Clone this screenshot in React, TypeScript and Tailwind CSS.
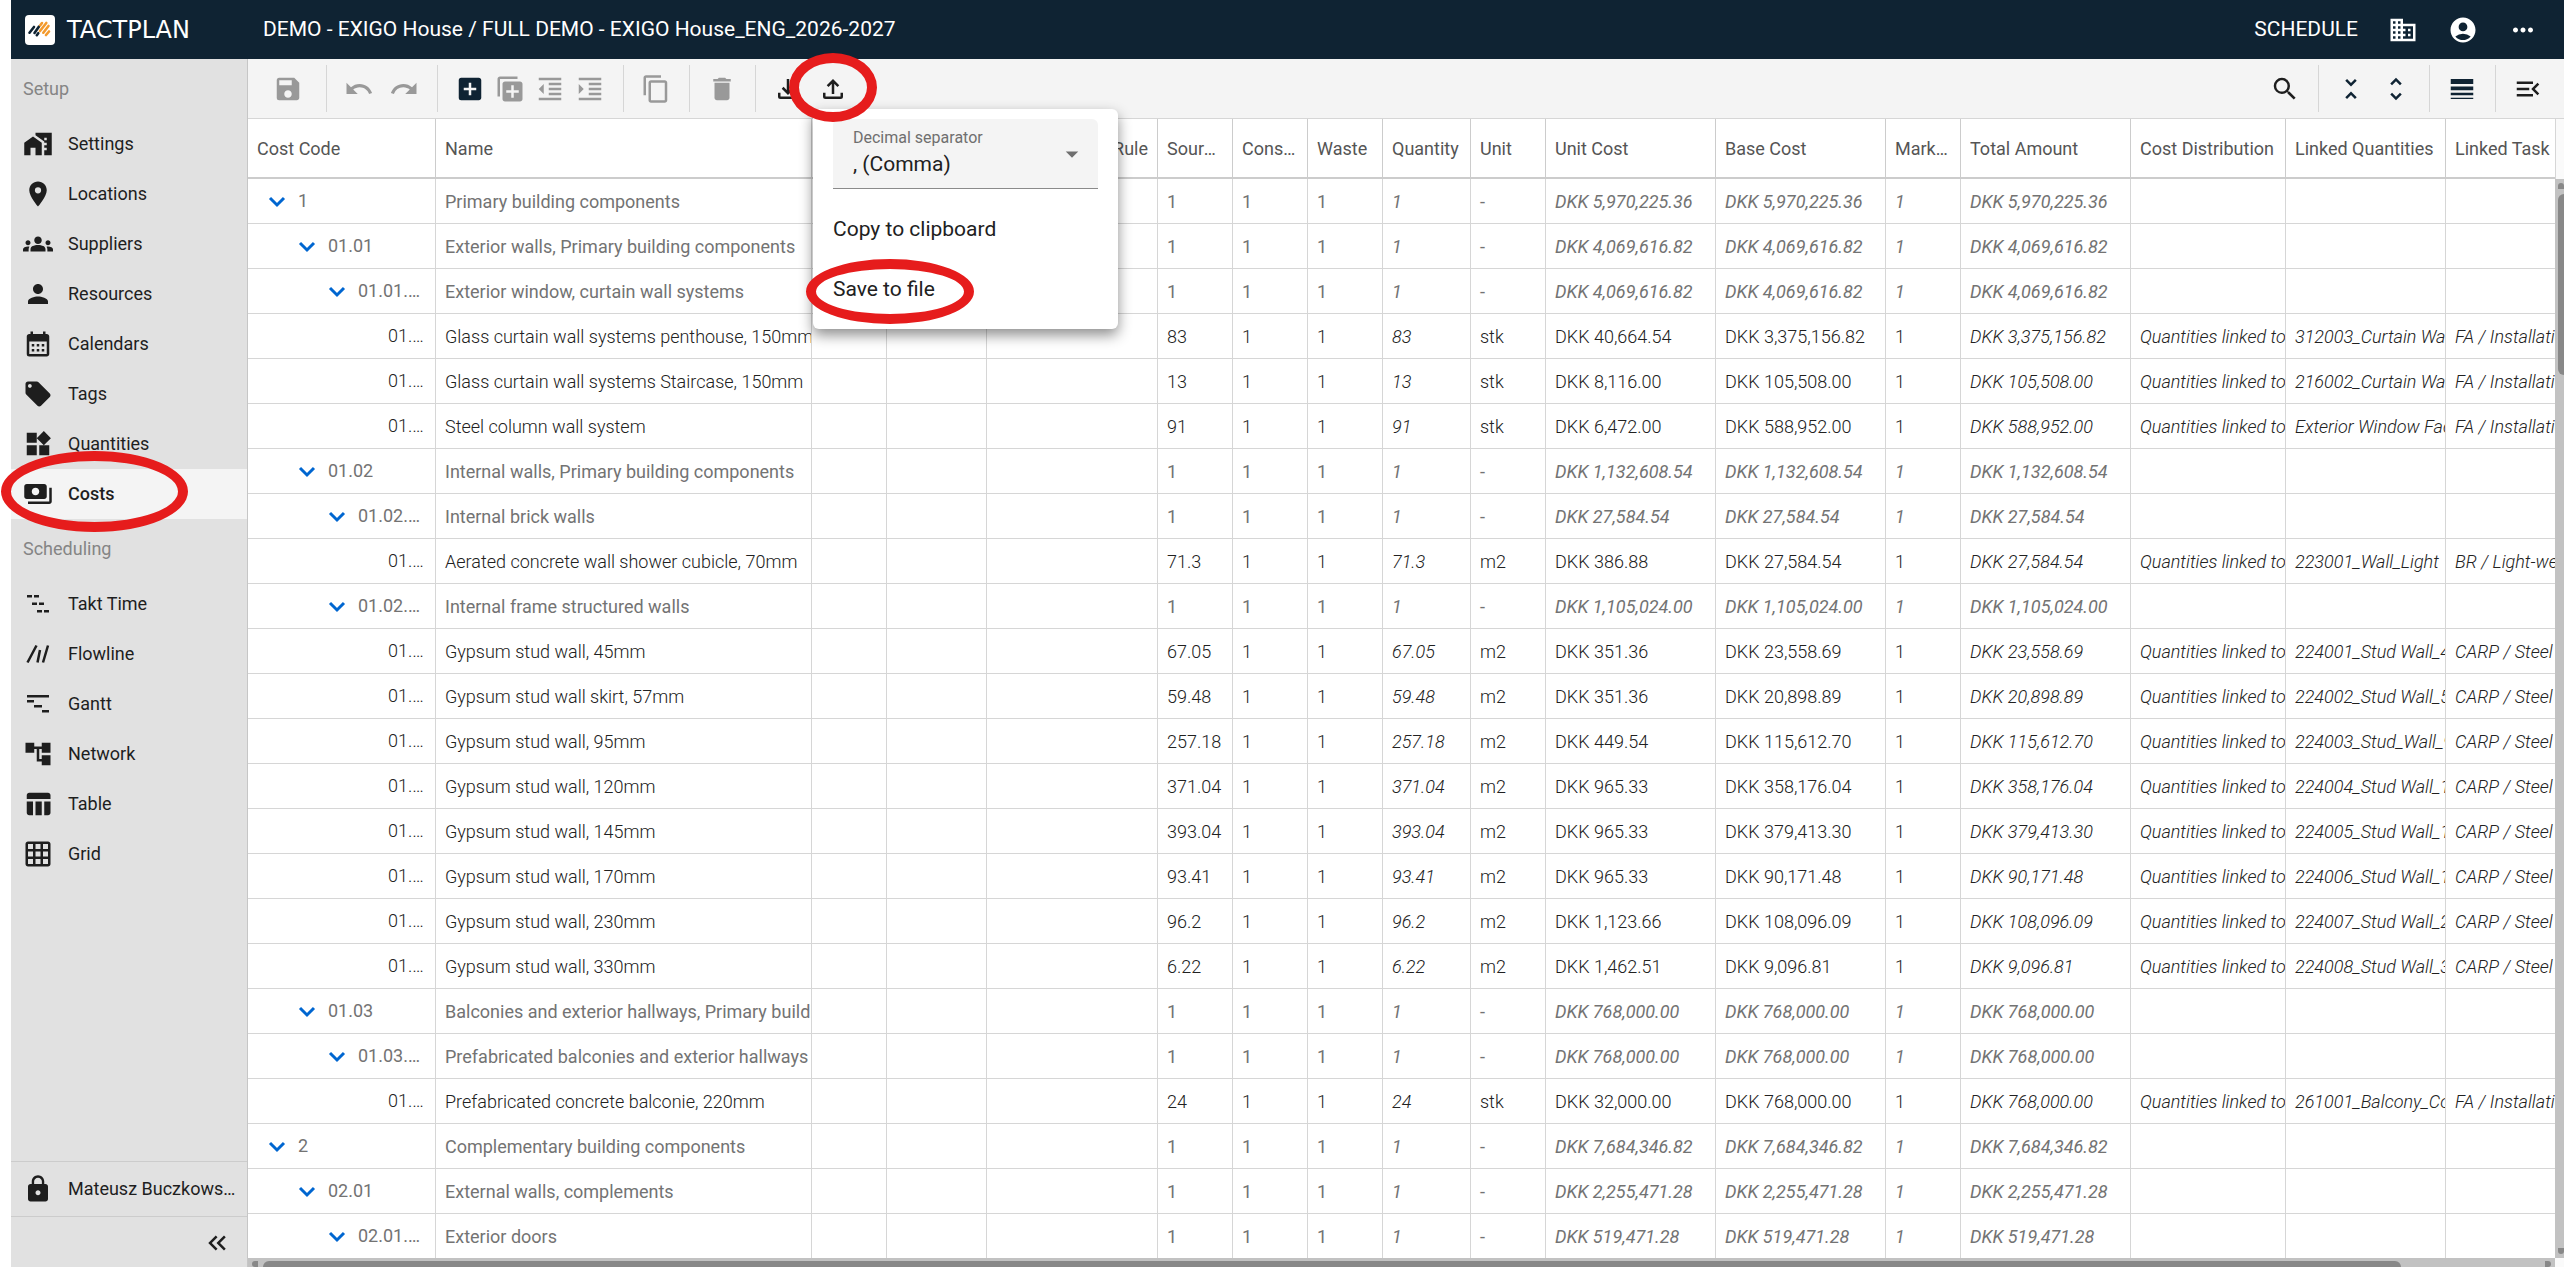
import type { ReactNode } from "react";
import type { IconType } from "react-icons";
import {
  MdAccountCircle,
  MdAccountTree,
  MdAddBox,
  MdArrowDropDown,
  MdBusiness,
  MdCalendarMonth,
  MdContentCopy,
  MdDelete,
  MdFormatIndentDecrease,
  MdFormatIndentIncrease,
  MdGridOn,
  MdGroups,
  MdHomeWork,
  MdKeyboardDoubleArrowLeft,
  MdLibraryAdd,
  MdLocalOffer,
  MdLocationOn,
  MdLock,
  MdMenuOpen,
  MdMoreHoriz,
  MdPayments,
  MdPerson,
  MdRedo,
  MdSave,
  MdSearch,
  MdTableChart,
  MdUndo,
  MdUnfoldLess,
  MdUnfoldMore,
  MdWidgets,
} from "react-icons/md";

type Icon = IconType | ((props: { className?: string }) => ReactNode);

/* ---------- Custom icons ---------- */

const TaktIcon = ({ className }: { className?: string }) => (
  <svg viewBox="0 0 24 24" fill="currentColor" className={className}>
    <path d="M1 3h5v2.500H1zM8 3h5v2.500H8zM6 10.500h5V13H6zM13 10.500h5V13h-5zM11 18h5v2.500h-5zM18 18h5v2.500h-5z" />
  </svg>
);

const FlowlineIcon = ({ className }: { className?: string }) => (
  <svg
    viewBox="0 0 24 24"
    fill="none"
    stroke="currentColor"
    strokeWidth="2.500"
    className={className}
  >
    <path d="M1.500 20.500L10.500 3.500M11.500 20.500L14 8M17 20.500L22 3.500" />
  </svg>
);

const GanttIcon = ({ className }: { className?: string }) => (
  <svg viewBox="0 0 24 24" fill="currentColor" className={className}>
    <path d="M1 3h22v2.500H1zM1 8h7v2.500H1zM8 13h8v2.500H8zM16 18h7v2.500h-7z" />
  </svg>
);

const DownloadIcon = ({ className }: { className?: string }) => (
  <svg
    viewBox="0 0 24 24"
    fill="none"
    stroke="currentColor"
    strokeWidth="2"
    className={className}
  >
    <path d="M12 4v11M7.700 11L12 15.300L16.300 11" />
    <path d="M5 15v3a1 1 0 0 0 1 1h12a1 1 0 0 0 1-1V15" />
  </svg>
);

const UploadIcon = ({ className }: { className?: string }) => (
  <svg
    viewBox="0 0 24 24"
    fill="none"
    stroke="currentColor"
    strokeWidth="2"
    className={className}
  >
    <path d="M12 16V5.500M7.700 9.700L12 5.400L16.300 9.700" />
    <path d="M5 15v3a1 1 0 0 0 1 1h12a1 1 0 0 0 1-1V15" />
  </svg>
);

const DuplicateIcon = ({ className }: { className?: string }) => (
  <MdLibraryAdd className={`${className} -scale-y-100`} />
);

const LineWeightIcon = ({ className }: { className?: string }) => (
  <svg viewBox="0 0 24 24" fill="currentColor" className={className}>
    <path d="M3 17h18v-2H3v2zm0 3h18v-1H3v1zm0-7h18v-3H3v3zm0-9v4h18V4H3z" />
  </svg>
);

const ChevronIcon = () => (
  <svg
    viewBox="0 0 18 18"
    fill="none"
    stroke="currentColor"
    strokeWidth="3"
    className="size-[18px] shrink-0 text-[#0066d0]"
  >
    <path d="M2 6L9 13L16 6" />
  </svg>
);

const Logo = () => (
  <a href="#home" className="flex w-[238px] items-center gap-3">
    <svg viewBox="0 0 30 30" className="size-[30px]">
      <rect width="30" height="30" rx="4" fill="#fff" />
      <g strokeWidth="2.600" strokeLinecap="round">
        <path
          d="M4.500 17.700L9 12M9.500 18L14 11.500M11.800 20.200L13.300 18.200"
          stroke="#0f2333"
        />
        <path
          d="M15.300 10.300L17 8M15 16L21.300 8M18.300 17.700L23.500 11M21 20L24 16.500"
          stroke="#f39a2d"
        />
      </g>
    </svg>
    <span className="font-['DejaVu_Sans',sans-serif] text-2xl">TACTPLAN</span>
  </a>
);

/* ---------- Data ---------- */

const setupItems: { label: string; icon: Icon }[] = [
  { label: "Settings", icon: MdHomeWork },
  { label: "Locations", icon: MdLocationOn },
  { label: "Suppliers", icon: MdGroups },
  { label: "Resources", icon: MdPerson },
  { label: "Calendars", icon: MdCalendarMonth },
  { label: "Tags", icon: MdLocalOffer },
  { label: "Quantities", icon: MdWidgets },
  { label: "Costs", icon: MdPayments },
];

const schedulingItems: { label: string; icon: Icon }[] = [
  { label: "Takt Time", icon: TaktIcon },
  { label: "Flowline", icon: FlowlineIcon },
  { label: "Gantt", icon: GanttIcon },
  { label: "Network", icon: MdAccountTree },
  { label: "Table", icon: MdTableChart },
  { label: "Grid", icon: MdGridOn },
];

const columns = [
  { label: "Cost Code", width: "w-[188px]" },
  { label: "Name", width: "w-[376px]" },
  { label: "", width: "w-[75px]" },
  { label: "", width: "w-[100px]" },
  { label: "Rule", width: "w-[171px]" },
  { label: "Source Quantity", width: "w-[75px]" },
  { label: "Consumption", width: "w-[75px]" },
  { label: "Waste", width: "w-[75px]" },
  { label: "Quantity", width: "w-[88px]" },
  { label: "Unit", width: "w-[75px]" },
  { label: "Unit Cost", width: "w-[170px]" },
  { label: "Base Cost", width: "w-[170px]" },
  { label: "Markup", width: "w-[75px]" },
  { label: "Total Amount", width: "w-[170px]" },
  { label: "Cost Distribution", width: "w-[155px]" },
  { label: "Linked Quantities", width: "w-[160px]" },
  { label: "Linked Task", width: "" },
];

interface CostRow {
  level: number;
  code: string;
  name: string;
  quantity: string;
  unit: string;
  unitCost: string;
  baseCost: string;
  linkedQuantity?: string;
  linkedTask?: string;
}

const group = (
  level: number,
  code: string,
  name: string,
  cost: string
): CostRow => ({
  level,
  code,
  name,
  quantity: "1",
  unit: "-",
  unitCost: cost,
  baseCost: cost,
});

const leaf = (
  code: string,
  name: string,
  quantity: string,
  unit: string,
  unitCost: string,
  baseCost: string,
  linkedQuantity: string,
  linkedTask: string
): CostRow => ({
  level: 3,
  code,
  name,
  quantity,
  unit,
  unitCost,
  baseCost,
  linkedQuantity,
  linkedTask,
});

const rows: CostRow[] = [
  group(0, "1", "Primary building components", "5,970,225.36"),
  group(1, "01.01", "Exterior walls, Primary building components", "4,069,616.82"),
  group(2, "01.01.01", "Exterior window, curtain wall systems", "4,069,616.82"),
  leaf("01.01.01.01", "Glass curtain wall systems penthouse, 150mm", "83", "stk", "40,664.54", "3,375,156.82", "312003_Curtain Wall", "FA / Installation"),
  leaf("01.01.01.02", "Glass curtain wall systems Staircase, 150mm", "13", "stk", "8,116.00", "105,508.00", "216002_Curtain Wall", "FA / Installation"),
  leaf("01.01.01.03", "Steel column wall system", "91", "stk", "6,472.00", "588,952.00", "Exterior Window Facade", "FA / Installation"),
  group(1, "01.02", "Internal walls, Primary building components", "1,132,608.54"),
  group(2, "01.02.01", "Internal brick walls", "27,584.54"),
  leaf("01.02.01.01", "Aerated concrete wall shower cubicle, 70mm", "71.3", "m2", "386.88", "27,584.54", "223001_Wall_Light", "BR / Light-weight"),
  group(2, "01.02.02", "Internal frame structured walls", "1,105,024.00"),
  leaf("01.02.02.01", "Gypsum stud wall, 45mm", "67.05", "m2", "351.36", "23,558.69", "224001_Stud Wall_45", "CARP / Steel"),
  leaf("01.02.02.02", "Gypsum stud wall skirt, 57mm", "59.48", "m2", "351.36", "20,898.89", "224002_Stud Wall_57", "CARP / Steel"),
  leaf("01.02.02.03", "Gypsum stud wall, 95mm", "257.18", "m2", "449.54", "115,612.70", "224003_Stud_Wall_95", "CARP / Steel"),
  leaf("01.02.02.04", "Gypsum stud wall, 120mm", "371.04", "m2", "965.33", "358,176.04", "224004_Stud Wall_120", "CARP / Steel"),
  leaf("01.02.02.05", "Gypsum stud wall, 145mm", "393.04", "m2", "965.33", "379,413.30", "224005_Stud Wall_145", "CARP / Steel"),
  leaf("01.02.02.06", "Gypsum stud wall, 170mm", "93.41", "m2", "965.33", "90,171.48", "224006_Stud Wall_170", "CARP / Steel"),
  leaf("01.02.02.07", "Gypsum stud wall, 230mm", "96.2", "m2", "1,123.66", "108,096.09", "224007_Stud Wall_230", "CARP / Steel"),
  leaf("01.02.02.08", "Gypsum stud wall, 330mm", "6.22", "m2", "1,462.51", "9,096.81", "224008_Stud Wall_330", "CARP / Steel"),
  group(1, "01.03", "Balconies and exterior hallways, Primary building", "768,000.00"),
  group(2, "01.03.01", "Prefabricated balconies and exterior hallways", "768,000.00"),
  leaf("01.03.01.01", "Prefabricated concrete balconie, 220mm", "24", "stk", "32,000.00", "768,000.00", "261001_Balcony_Concrete", "FA / Installation"),
  group(0, "2", "Complementary building components", "7,684,346.82"),
  group(1, "02.01", "External walls, complements", "2,255,471.28"),
  group(2, "02.01.01", "Exterior doors", "519,471.28"),
];

const indents = ["pl-5", "pl-[50px]", "pl-20", "pl-[140px]"];

/* ---------- Layout parts ---------- */

const Header = () => (
  <header className="flex h-[59px] shrink-0 items-center bg-[#0f2333] pr-[26px] pl-[14px] text-white">
    <Logo />
    <h1 className="flex-1 text-[21px]">
      DEMO - EXIGO House / FULL DEMO - EXIGO House_ENG_2026-2027
    </h1>
    <div className="flex items-center gap-[30px]">
      <button className="text-[21px]">SCHEDULE</button>
      <button aria-label="Company">
        <MdBusiness className="size-[30px]" />
      </button>
      <button aria-label="Account">
        <MdAccountCircle className="size-[30px]" />
      </button>
      <button aria-label="More">
        <MdMoreHoriz className="size-[30px]" />
      </button>
    </div>
  </header>
);

const NavItem = ({ label, icon: ItemIcon }: { label: string; icon: Icon }) => {
  const active = label === "Costs";
  return (
    <a
      href={`#${label}`}
      className={`flex h-[50px] items-center gap-[15px] pl-3 text-lg ${
        active ? "bg-[#f4f4f4] font-medium" : ""
      }`}
    >
      <span className="flex size-[30px] items-center justify-center">
        <ItemIcon
          className={
            ["Takt Time", "Flowline", "Gantt"].includes(label)
              ? "size-6"
              : "size-[30px]"
          }
        />
      </span>
      {label}
    </a>
  );
};

const Sidebar = () => (
  <aside className="flex w-[237px] shrink-0 flex-col border-r border-[#c6c6c6] bg-[#e1e1e1] text-[#1e1e1e]">
    <h2 className="flex h-[60px] items-center pl-3 text-lg text-[#858585]">
      Setup
    </h2>
    <nav>
      {setupItems.map((item) => (
        <NavItem key={item.label} {...item} />
      ))}
    </nav>
    <h2 className="flex h-[60px] items-center pl-3 text-lg text-[#858585]">
      Scheduling
    </h2>
    <nav className="flex-1">
      {schedulingItems.map((item) => (
        <NavItem key={item.label} {...item} />
      ))}
    </nav>
    <div className="flex h-[55px] items-center gap-[15px] border-t border-[#cccccc] pr-1 pl-3">
      <MdLock className="size-[30px] shrink-0" />
      <span className="truncate text-lg">Mateusz Buczkowski Exigo</span>
    </div>
    <div className="flex h-[51px] items-center justify-end border-t border-[#cccccc] pt-0.5 pr-[15px]">
      <button aria-label="Collapse sidebar">
        <MdKeyboardDoubleArrowLeft className="size-[30px]" />
      </button>
    </div>
  </aside>
);

const Divider = () => (
  <div className="mr-[17px] ml-[18px] h-[47px] w-px shrink-0 bg-[#d6d6d6]" />
);

const ToolButton = ({
  label,
  icon: ToolIcon,
  className = "text-[#999999]",
}: {
  label: string;
  icon: Icon;
  className?: string;
}) => (
  <button aria-label={label} className={className}>
    <ToolIcon className="size-[30px]" />
  </button>
);

const ExportMenu = () => (
  <div className="absolute top-[35px] -left-[5px] z-20 w-[305px] rounded-md bg-white py-[10px] text-[#212121] shadow-[0_6px_14px_rgba(0,0,0,0.45)]">
    <div className="relative mx-5 h-[70px] rounded-t-md border-b border-[#8a8a8a] bg-[#f4f4f4]">
      <label
        htmlFor="separator"
        className="absolute top-[9px] left-5 text-base leading-5 text-[#6f6f6f]"
      >
        Decimal separator
      </label>
      <select
        id="separator"
        className="h-full w-full appearance-none pt-6 pl-5 text-[21px]"
      >
        <option>, (Comma)</option>
        <option>. (Dot)</option>
      </select>
      <MdArrowDropDown className="pointer-events-none absolute top-5 right-[11px] size-[30px] text-[#6f6f6f]" />
    </div>
    <button className="mt-[10px] flex h-[60px] w-full items-center px-5 pt-0.5 text-[21px]">
      Copy to clipboard
    </button>
    <div className="relative">
      <button className="flex h-[60px] w-full items-center px-5 pt-0.5 text-[21px]">
        Save to file
      </button>
      <div className="pointer-events-none absolute top-0 -left-[7px] h-[65px] w-[168px] rounded-[50%] border-[10px] border-[#e61c1c]" />
    </div>
  </div>
);

const Toolbar = () => (
  <div className="relative z-10 flex h-[60px] shrink-0 items-center border-b border-[#d6d6d6] bg-[#f4f4f4] pr-[21px] pl-[25px] text-[#1e1e1e]">
    <ToolButton label="Save" icon={MdSave} className="mr-[5px] text-[#999999]" />
    <Divider />
    <div className="flex gap-[15px]">
      <ToolButton label="Undo" icon={MdUndo} />
      <ToolButton label="Redo" icon={MdRedo} />
    </div>
    <Divider />
    <div className="flex gap-[10px]">
      <ToolButton label="Add" icon={MdAddBox} className="text-[#0f2333]" />
      <ToolButton label="Duplicate" icon={DuplicateIcon} />
      <ToolButton label="Outdent" icon={MdFormatIndentDecrease} />
      <ToolButton label="Indent" icon={MdFormatIndentIncrease} />
    </div>
    <Divider />
    <ToolButton label="Copy" icon={MdContentCopy} />
    <Divider />
    <ToolButton label="Delete" icon={MdDelete} />
    <Divider />
    <div className="flex gap-[15px]">
      <ToolButton label="Import" icon={DownloadIcon} className="" />
      <div className="relative flex">
        <ToolButton label="Export" icon={UploadIcon} className="" />
        <ExportMenu />
        <div className="pointer-events-none absolute -top-[21px] -left-[29px] z-30 h-[69px] w-[88px] rounded-[50%] border-[10px] border-[#e61c1c]" />
      </div>
    </div>
    <div className="flex-1" />
    <ToolButton label="Search" icon={MdSearch} className="" />
    <Divider />
    <div className="flex gap-[15px] text-[#0f2333]">
      <ToolButton label="Collapse all" icon={MdUnfoldLess} className="" />
      <ToolButton label="Expand all" icon={MdUnfoldMore} className="" />
    </div>
    <Divider />
    <ToolButton label="Row height" icon={LineWeightIcon} className="text-[#0f2333]" />
    <Divider />
    <ToolButton label="Columns" icon={MdMenuOpen} className="" />
  </div>
);

const Row = ({ row }: { row: CostRow }) => {
  const isLeaf = row.level === 3;
  const border = "overflow-hidden border-r border-b border-[#d6d6d6] whitespace-nowrap";
  const cell = `${border} px-[9px] pt-0.5`;
  const costStyle = isLeaf ? "" : "italic";
  return (
    <tr className={`h-[45px] ${isLeaf ? "font-light text-[#212121]" : "text-[#737373]"}`}>
      <td className={`${border} pr-[9px] ${indents[row.level]}`}>
        <div className="flex items-center gap-[12px]">
          {!isLeaf && <ChevronIcon />}
          <span className="truncate">{row.code}</span>
        </div>
      </td>
      <td className={cell}>{row.name}</td>
      <td className={cell}></td>
      <td className={cell}></td>
      <td className={cell}></td>
      <td className={cell}>{row.quantity}</td>
      <td className={cell}>1</td>
      <td className={cell}>1</td>
      <td className={`${cell} italic`}>{row.quantity}</td>
      <td className={cell}>{row.unit}</td>
      <td className={`${cell} ${costStyle}`}>DKK {row.unitCost}</td>
      <td className={`${cell} ${costStyle}`}>DKK {row.baseCost}</td>
      <td className={`${cell} ${costStyle}`}>1</td>
      <td className={`${cell} italic`}>DKK {row.baseCost}</td>
      <td className={`${cell} italic`}>{isLeaf && "Quantities linked to task"}</td>
      <td className={`${cell} italic`}>{row.linkedQuantity}</td>
      <td className={`${cell} border-r-0 italic`}>{row.linkedTask}</td>
    </tr>
  );
};

const CostTable = () => (
  <div className="flex min-h-0 flex-1">
    <div className="flex min-w-0 flex-1 flex-col">
      <div className="min-h-0 flex-1 overflow-hidden">
        <table className="w-full table-fixed border-separate border-spacing-0 text-lg">
          <thead>
            <tr className="h-[60px] text-left text-[#555555]">
              {columns.map((column, i) => (
                <th
                  key={i}
                  className={`border-r border-b-2 border-[#cccccc] pt-0.5 pr-[9px] pl-[9px] font-normal last:border-r-0 last:pr-1 ${column.width} ${
                    column.label === "Rule" ? "text-right" : ""
                  }`}
                >
                  <div className="truncate">{column.label}</div>
                </th>
              ))}
            </tr>
          </thead>
          <tbody>
            {rows.map((row) => (
              <Row key={row.code} row={row} />
            ))}
          </tbody>
        </table>
      </div>
      {/* Horizontal scrollbar */}
      <div className="flex h-[9px] shrink-0 items-end bg-[#c2c2c2] px-1">
        <div className="h-[6px] w-[6px] rounded-l-full bg-[#888888]" />
        <div className="ml-[5px] h-[6px] w-[93%] rounded-t-md bg-[#888888]" />
        <div className="ml-auto h-[6px] w-[6px] rounded-r-full bg-[#888888]" />
      </div>
    </div>
    {/* Vertical scrollbar */}
    <div className="flex w-[9px] shrink-0 flex-col">
      <div className="h-[60px] border-l border-[#d6d6d6] bg-[#fafafa]" />
      <div className="flex flex-1 flex-col items-end bg-[#c2c2c2] py-1">
        <div className="h-[6px] w-[6px] rounded-t-full bg-[#888888]" />
        <div className="mt-[5px] h-[181px] w-[6px] rounded-l-md bg-[#888888]" />
        <div className="mt-auto h-[6px] w-[6px] rounded-b-full bg-[#888888]" />
      </div>
      <div className="h-[9px] bg-[#fafafa]" />
    </div>
  </div>
);

export default function App() {
  return (
    <div className="relative flex h-screen flex-col overflow-hidden bg-white pl-[11px] font-[Roboto,sans-serif]">
      <Header />
      <div className="flex min-h-0 flex-1">
        <Sidebar />
        <main className="flex min-w-0 flex-1 flex-col">
          <Toolbar />
          <CostTable />
        </main>
      </div>
      <div className="pointer-events-none absolute top-[451px] left-[1px] h-[81px] w-[187px] rounded-[50%] border-[10px] border-[#e61c1c]" />
    </div>
  );
}
